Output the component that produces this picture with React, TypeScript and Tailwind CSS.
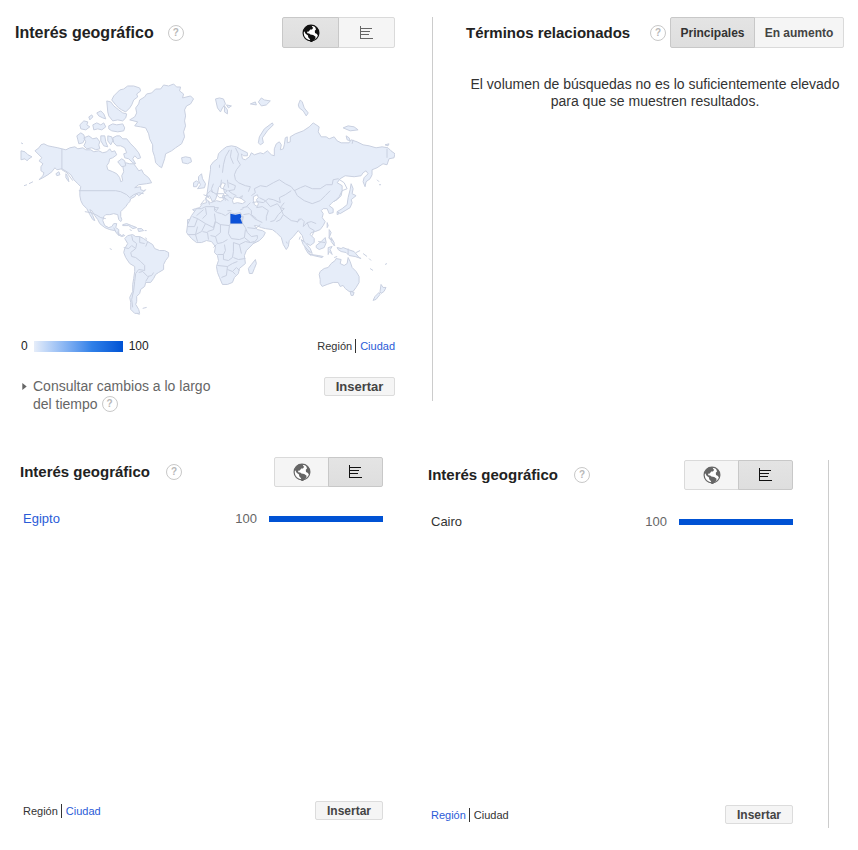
import type { ReactNode } from "react";

function GlobeIcon() {
  return (
    <svg viewBox="0 0 18 18" className="size-[18px]" aria-hidden="true">
      <circle cx="9" cy="9" r="7.9" fill="#fff" stroke="currentColor" strokeWidth="1.2" />
      <path
        fill="currentColor"
        d="M1.400 7.200 2.600 4.200 5 2 8 1l2.600.4-.8 1.400 1.400 1-1.200 1.600-1.800.2-1.400 1.800-1.800.4.4 1.400 1.800.2 1.200 1.200 2.800.4 2.400 1.800-.4 2-2 1.600-1 1.600-1.800.2-.4-3-1.800-2-.2-1.600-2.400-1.800L2.400 7.600z"
      />
      <path fill="currentColor" d="M13 2.200 15.400 4l1.400 3 .2 3.400-1 1.200-1.400-1.800-1.600-.8-.2-2.200 1.200-1.200-.4-1.400z" />
    </svg>
  );
}

function BarsIcon() {
  return (
    <svg viewBox="0 0 16 16" className="size-4" fill="none" stroke="currentColor" aria-hidden="true">
      <path d="M1.500 1v13M1 3.500h12M1 6.500h10M1 9.500h9M1 13.500h13" />
    </svg>
  );
}

const helpRing =
  "inline-flex size-4 shrink-0 items-center justify-center rounded-full border border-[#c8c8c8] text-[10px] leading-none font-bold text-[#b8b8b8]";

function Help() {
  return (
    <button type="button" aria-label="Ayuda" className={helpRing}>
      ?
    </button>
  );
}

function Toggle({ active, large = false }: { active: "map" | "list"; large?: boolean }) {
  const size = large ? "h-[31px] w-[57px]" : "h-[30px] w-[55px]";
  const on = "border-[#c8c8c8] bg-linear-to-b from-[#e4e4e4] to-[#dedede] text-[#111] z-1";
  const off = "border-[#dadada] bg-[#f5f5f5] text-[#666]";
  return (
    <div className="flex">
      <button
        type="button"
        aria-label="Mapa"
        className={`flex items-center justify-center rounded-l-xs border ${size} ${active === "map" ? on : off}`}
      >
        <GlobeIcon />
      </button>
      <button
        type="button"
        aria-label="Lista"
        className={`-ml-px flex items-center justify-center rounded-r-xs border ${size} ${active === "list" ? on : off}`}
      >
        <BarsIcon />
      </button>
    </div>
  );
}

function InsertButton({ large = false }: { large?: boolean }) {
  return (
    <button
      type="button"
      className={`flex h-[19px] items-center justify-center rounded-xs border border-[#dcdcdc] bg-[#f5f5f5] font-bold text-[#444] ${large ? "w-[71px] text-[13px]" : "w-[68px] text-xs"}`}
    >
      Insertar
    </button>
  );
}

function Scope({ active }: { active: "region" | "city" }) {
  return (
    <div className="flex items-center text-[11px] leading-4">
      {active === "region" ? (
        <span className="text-[#333]">Región</span>
      ) : (
        <a href="#region" className="text-[#2a5bd7]">
          Región
        </a>
      )}
      <span className="mr-1 ml-[3px] h-[14px] w-px bg-[#333]" />
      {active === "city" ? (
        <span className="text-[#333]">Ciudad</span>
      ) : (
        <a href="#ciudad" className="text-[#2a5bd7]">
          Ciudad
        </a>
      )}
    </div>
  );
}

function WorldMap() {
  return (
    <svg viewBox="20 78 376 240" className="block w-full" role="img" aria-label="Mapa mundial">
      <g fill="#e6edf9" stroke="#c9d0e0" strokeWidth="1" strokeLinejoin="round">
        {/* North and Central America */}
        <path d="M35 151l4-3 2-3 3-1 4 2 5 1 5 1 4 1 4 1 4-2 5-1 3 2 5-1 3 2 5 0 3 2 5-1 4 2 4-1 3-3 2 3 3-1 2 4-4 3-3 1-1 4-2 3 1 4 5 2 4 2 3 4 1 4 2-1-1-5 2-4-1-6 3-3 4 1 4 0 3 4 2 3 3-1 2 4 5 4 3 5-5 1-8 1-4 3 6-1 0 3 3 1 2-1-3 3-4 3-2-2-2 3-4 2-1 3-2 2-2 3-3 3-2 2 0 5 1 3-1 2-2-2-1-5-4-1-4 1-4 0-2 2-1 4 2 5 4 2 3-1 2-3 3 0-1 4 3 2 0 4 3 2 2-1 1 1-3 1-4-2-3-4-5-1-5-2-5-4-2-4-3-4-3-5-2-1 3 6 2 5-2-1-3-5-3-6-4-4-2-4-1-5 0-5 1-4-3-3-4-4-3-5-4-3-5-3-5 1-2-2-3 4-4 3-5 3-4 2 4-4 1-3-3-2 0-4 2-3-4-3 3-3z" />
        <path d="M21 151l4 1 3 3 4 2-3 2-2 2-2-2-4 1zM21 143l2 1M33 182l-4 2M27 185l-3 1M56 174l3-2 1 3-3 1zM66 174l2 3 1 5-3-4z" />
        <path d="M77 136l4-3 3 2 1 4-2 4-4 1-1-4zM84 138l5-2 4 3 4-1 3 4-1 3 1 4-4 1-4-2-5 1-3-3 2-4zM80 125l4-4 4 1-1 3 3 2-4 3-5-1zM89 117l3-2 1 2-3 3zM93 125l4-2 4 2 3-2 2 4-4 3-4-1-4 1zM97 113l4-2 3 3 2 5-3-1-4-2zM101 136l4 0 1 6 2 5-4-1-3-5zM108 136l4 1 1 4-2 4-3-4zM113 138l4-2 3 0 3 3 4 0 4 5 4 4 4 5 2 5-3 1-3-3-2 3 3 5-3-1-4-4-4-1-1-4 3-1-2-5-4-2-4 0-3-3zM109 126l4-2 4 1 6-1 2 4-1 3-6 1-6-1-3-2z" />
        <path d="M107 101l4 1 3 4 5 4 4 3 4 1-1 4-3 3-5-1-5 1-4-5-1-4zM112 100l2-4 3-3 3-3 4-1 4-3 6 0 6 2 1 3-4 3 1 3-4 3-2 5-2 3-4 4-4-2-3-2-3-3zM118 162l4-3 3 2 1 5-4 1z" />
        <path d="M123 225l4-1 5 2 5 2-4 1-4-3-6 0zM138 229l4 0 2 2-5 1zM145 231l2 0M130 230l2 1M146 238l1 2M110 249l2 1" />
        <path d="M130 120l5-3 2-4-1-5 3-4 1-4 5-3 2-3 5-1 4-4 5 0 3-4 5 1 5-2 3 3 4 0-1 4 4 3-1 4 8-2 3 3-3 5-4 2-2 4 1 6-1 5 1 5-2 6 1 5-3 7-6 4-4 3-6 3-1 5-3 9-3-2-3-3-1-6-2-6 0-6-3-6-1-5-3-6-5-1-6-1 3-4z" />
        <path d="M182 158l4-1 5 1 1 4-4 2-5-1z" />

        {/* South America */}
        <path d="M125 239l3-3 5-1 3 2 4 0 4 2 4 3 5 3 2 4 5 2 5 0 4 2 0 4-3 4-2 4 0 5-5 3-3 2-2 4-3 4-5 0-1 4-4 3-1 4-3 3 0 5-1 3 3 5 1 4-5 0-4-4 0-7-1-5 3-6 0-7 1-6 1-7 0-5-5-3-4-6-2-5 1-4 3-5zM143 309l4-1M137 314l3 1" />

        {/* Europe and Asia */}
        <path d="M211 170l0-4 3-4 4-3 1-5 4-4 4-3 5-1 5 1 5 3 6 3 0 3-4 0-2-2 1 5 3 1 4-3 2-4 3 2 6-2 3 1 4-3 4 4 3 1 0-7 2-5 3-2 2 3-1 5 3-1 1-4 1-7 2-1 0 6 3-1 0-5 5-3 8-3 6-4 4-4 6 4-1 5 3 5 5 0 3 2 5-2 3 4 4 2 8 0 2-3 6 2 6 3 6 1 7 2 6-1 6 1 3 3 4 3-1 4-5 1-2 6-4-1-6 4-5 2 0 5-2 4-4 3-1 5-2-5 1-4 4-4-2-3-3 2-2 3-7 1-9-1-5 3-3 4 5 3 0 5-1 5-4 4-4 2-2 2-2 2 4 3 0 4-4 1-2-5-4 0-2 2 2 3-1 4 3 4-2 4-3 4-5 2-4 1-1 2 4 4 0 4-4 3-3-2-1 3 3 6 2 3-3-2-3-5-1-6-2-7-4-5-5 6-4 4-1 6-2 3-3-5-2-7-5-5-4-3-7-1-4-1-5-2-2 0 3 4 5 1 3 2-2 4-4 4-8 4-2-3-2-6-3-7-2-4 0-4 1-4-6 1-5-1-4-1-1 3-4 1 1 3-3 0-2-4-5-4-3-1 5 6 0 3-3-3-6-6-5 1-2 3-4 2 0 5-4 2-3 1-2-2 0-6 6-1 3-3 0-3-4-3 3-1 4-1 3-4 4-1-1-5 2 3 3 2 6-2 4 1 3-2-1-4 6 0-4-3-1-5 2-4-3-1-4 5-1 6-2 6-3 2-3-6-3 2z" />
        <path fill="#fff" d="M233 201l2-4 4 1 2 0 5 4-3 2-5-1-4 1zM240 198l3-2-1 3zM254 197l4-2 1 3-2 2 2 4-1 3-3-2-1-4z" />
        <path d="M199 177l3-3 1 5 3 5-1 4-7 1 3-4-2-4zM194 183l3-2 2 2-2 4-3 0zM216 99l4-1 4 1 2 5-3 4-2 4-3-4zM225 106l3 4 0 4-3-2zM227 105l5 1-3 2zM251 104l5-2 1 3zM259 102l3-4 3 2 6 1-4 4-5 1zM259 143l1-6 5-8 8-6 1 2-6 6-5 7 1 5-3 2zM299 105l2-5 2 2 2 6 4 5-2 3-3-5-4-3zM344 128l5-2 6 1 4 3-8 1zM347 136l3 2 1 3-3-1zM386 145l4-1-1 2zM378 180l2 2M380 185l2 0M220 168l0-3M214 208l5 0-2 3zM209 201l1 4M228 211l4 0M241 210l3-1" />
        <path d="M349 198l2-8 1-6 2 5-1 5 4 2-5 4 1 3-2 5-5 3-5 3-3-2 5-3 5-4zM338 212l2 2-2 1zM328 223l1 3-1 2zM330 230l2 3-2 5 3 3-3-2zM332 238l3 5 0 3-3-4zM302 240l4 3 5 6 2 5-4-3-5-6zM312 255l7 1 5 1-1 1-9-2zM317 246l5-4 4-4 1 5-2 5-5 2-3-2zM329 248l4-1-2 3 2 5-3-3-1 3zM334 245l2 1M335 258l3-1M338 248l4 1 2-1 5 2 6 2 5 6 2 1-6-2-6-1-3-3-5-1-3-2zM357 253l4-2M364 254l4 3M370 259l2 2M371 269l3 2M386 265l2-1M287 242l1 2M301 237l-1 3" />

        {/* Africa */}
        <path d="M197 209l5 0 4-2 9 0 0 4 3 2 4 1 4 2 4-3 5 1 6-1 2 4-1 5 4 6 2 5 4 4 6-1 0 3-5 6-6 6-2 5 1 8-6 5-1 5-4 4-2 5-5 2-5 0-3-7-2-5-1-6 2-6-1-5-3-3 1-6-4-5-5-1-5 2-5 0-5-4-5-6 1-8 4-9z" />
        <path d="M256 260l1 4-2 5-2 5-3 0-1-5 3-4z" />

        {/* Oceania */}
        <path d="M321 272l4-3 4-1 3-4 4-3 1-2 5 1-1 4 4 2 3-2 1-6 2 4 2 6 4 4 3 5 0 6-3 5-3 4-4 0-4-3-2-3-3 1-2-4-5 0-6 2-5 2-2-3 0-4-1-5zM351 292l4 1-1 3-2 0zM382 285l2 3 3 0-2 4-3 2-1-2zM380 293l1 2-4 5-3 1 2-4z" />
      </g>

      {/* Country borders */}
      <g fill="none" stroke="#c9d0e0" strokeWidth="1" strokeLinejoin="round">
        <path d="M62 149v21l5 3 6 8M79 191h37l5 1 6 3 3 3 4-3 5-2 5 1M85 212l6 1 5 2 5 3 5 1M114 228l2 4M118 232l1 4" />
        <path d="M132 236l1 5 4 3-1 5M140 237l0 6 5 1M148 242l-2 5M124 248l5 1 3-3 4 3-5 4 1 4 4 1 5 4 4 4 0 5-6-1-3 4-1 8-1 9-2 9 1 8M139 273l4-1 5 5 4-1 2-3M149 277l-3 5" />
        <path d="M223 173l1-8 2-8 4-7M232 150l-1 7 3 7M236 148l3 6-1 6 3 5-4 5M237 170l-2 5 1 5 3 3 7 3 5 1-2 5M222 180l-1 8 7 3-4 3-8 0-5-3-4 4 3 4M214 184l-2 5 1 4M228 180l1 8M229 183l7 3-1 4-6 1M229 191l4 3 4 2M216 194l4 4 5 0 4 3M224 194l2 7M229 197l4 2M205 200l-4 5M204 195l5 2" />
        <path d="M252 196l4-3-1-4 6-3 6 1 7-4 6-3 6 4 6 3 3 4 6-3 5-2 7 3 8 0 6-4 6 0 1-5 5-1 6 4 3 6-5 2-3 6-5 5M295 190l3 6 7 5 8 3 8-3 5-5 5-5M253 203l5-1 6 1 5-4 5 1 7 3-1-5 6-3 6-4M260 198l6 3 5 6 7-3 3 4 4 1-6 6-4 6-4 1M257 208l6-1 6 4-2 6 0 4M243 208l5-1 4 4 0 4 5 4M247 207l4-4M244 215l6-1 5 5 8 4M248 228l8 1 5-4M281 208l3 7 8 6 6 1 4-3 3 3-1 5M284 215l-3 5-4 2M300 219l-2 4M304 227l4-4 4-1 5 2M308 223l2 5 5 3-2 5M285 203l-4 5" />
        <path d="M197 216l7-6M193 217l5 2 8 5 8 4 2-7-1-7M206 208l1 7-4 4M188 227l7 0 3-8M198 227l-2 8-8 0M206 224l-4 8-6 3 2 7M203 232l5 1 1 7M216 222l-2 8-6 2M216 222l5 3 0 8-5 4-5-1M221 225l9 1 1-2 12 0M231 214l0 10M230 226l-1 8 3 5 8 1 5-2 1-8M216 237l2 7 5-1 5-3M217 245l-3 3M218 255l6 0 2-4-1-6M224 255l0 5 5 1 4-3 1-6 0-9M234 243l6 2 2 9M240 245l6-3 5 1M245 238l6 5 4-1M234 258l5 2 7-1M218 266l10 1 5-3 5-2M228 267l-1 9-5 2M228 270l5 2 4-4 3 3M233 272l3 3" />
        <path d="M319 242l7 1M349 249l0 6M354 140l-1 4M388 149v9" />
      </g>
      <path d="M231 214l5 1 5-1 1 3-1 2 2 5H231z" fill="#0b51d8" />
    </svg>
  );
}

function PanelHeader({ title, large = false, children }: { title: string; large?: boolean; children: ReactNode }) {
  return (
    <header className="flex items-center">
      <h2 className={`font-bold text-[#222] ${large ? "mr-3.5 text-base" : "mr-4 text-[15px] leading-6"}`}>{title}</h2>
      <Help />
      <div className="ml-auto">{children}</div>
    </header>
  );
}

function ListPanel({ place, linked = false }: { place: string; linked?: boolean }) {
  return (
    <>
      <PanelHeader title="Interés geográfico">
        <Toggle active="list" />
      </PanelHeader>
      <div className="mt-[22px] flex items-center pl-[3px] text-[13px] leading-5">
        {linked ? (
          <a href="#egipto" className="text-[#2a5bd7]">
            {place}
          </a>
        ) : (
          <span className="text-[#333]">{place}</span>
        )}
        <span className="mr-3 ml-auto text-[#666]">100</span>
        <span className="h-1.5 w-[114px] bg-[#0052d4]" />
      </div>
      <div className="mt-auto flex items-center justify-between pl-[3px]">
        <Scope active={linked ? "region" : "city"} />
        <InsertButton />
      </div>
    </>
  );
}

export default function App() {
  return (
    <main className="bg-white font-['Liberation_Sans',Arial,sans-serif]">
      <div className="grid grid-cols-[432fr_426fr] items-start pt-[17px]">
        <section className="pr-[37px] pl-[15px]">
          <PanelHeader title="Interés geográfico" large>
            <Toggle active="map" large />
          </PanelHeader>
          <div className="mt-[30px] pl-[5px]">
            <WorldMap />
          </div>
          <div className="mt-[21px] flex items-center pl-1.5 text-[#222]">
            <span className="text-xs">0</span>
            <span className="mx-1.5 h-[11px] w-[89px] bg-linear-to-r from-[#e6edf9] via-[#2f80e8] via-65% to-[#0052d4]" />
            <span className="text-xs">100</span>
            <div className="ml-auto">
              <Scope active="region" />
            </div>
          </div>
          <div className="mt-[23px] flex items-start justify-between pl-[7px]">
            <button type="button" className="flex items-start text-left text-sm leading-[18px] text-[#666]">
              <svg viewBox="0 0 5 8" className="mt-[6px] mr-[6px] h-[7px] w-[5px] shrink-0" aria-hidden="true">
                <path d="M0 0l5 4-5 4z" fill="#666" />
              </svg>
              <span>
                Consultar cambios a lo largo
                <span className="flex items-center gap-1">
                  del tiempo <span className={helpRing}>?</span>
                </span>
              </span>
            </button>
            <InsertButton large />
          </div>
        </section>

        <section className="min-h-[384px] border-l border-[#ccc] pr-[14px] pl-[33px]">
          <header className="flex items-center">
            <h2 className="text-[15px] leading-6 font-bold text-[#222]">Términos relacionados</h2>
            <div className="ml-auto flex items-center">
              <Help />
              <button
                type="button"
                className="z-1 ml-1 h-[31px] w-[85px] rounded-l-xs border border-[#c8c8c8] bg-linear-to-b from-[#e4e4e4] to-[#dedede] text-xs font-bold text-[#333]"
              >
                Principales
              </button>
              <button
                type="button"
                className="-ml-px h-[31px] w-[90px] rounded-r-xs border border-[#dadada] bg-[#f5f5f5] text-xs font-bold text-[#444]"
              >
                En aumento
              </button>
            </div>
          </header>
          <p className="mt-[28px] text-center text-sm leading-[17px] text-[#333]">
            El volumen de búsquedas no es lo suficientemente elevado
            <br />
            para que se muestren resultados.
          </p>
        </section>
      </div>

      <div className="mt-[44px] grid grid-cols-[408fr_421fr_29fr] items-start pb-5">
        <section className="flex min-h-[363px] flex-col pr-[25px] pl-5">
          <ListPanel place="Egipto" linked />
        </section>
        <section className="mt-[3px] flex min-h-[368px] flex-col border-r border-[#ccc] pr-[35px] pb-1 pl-5">
          <ListPanel place="Cairo" />
        </section>
      </div>
    </main>
  );
}
